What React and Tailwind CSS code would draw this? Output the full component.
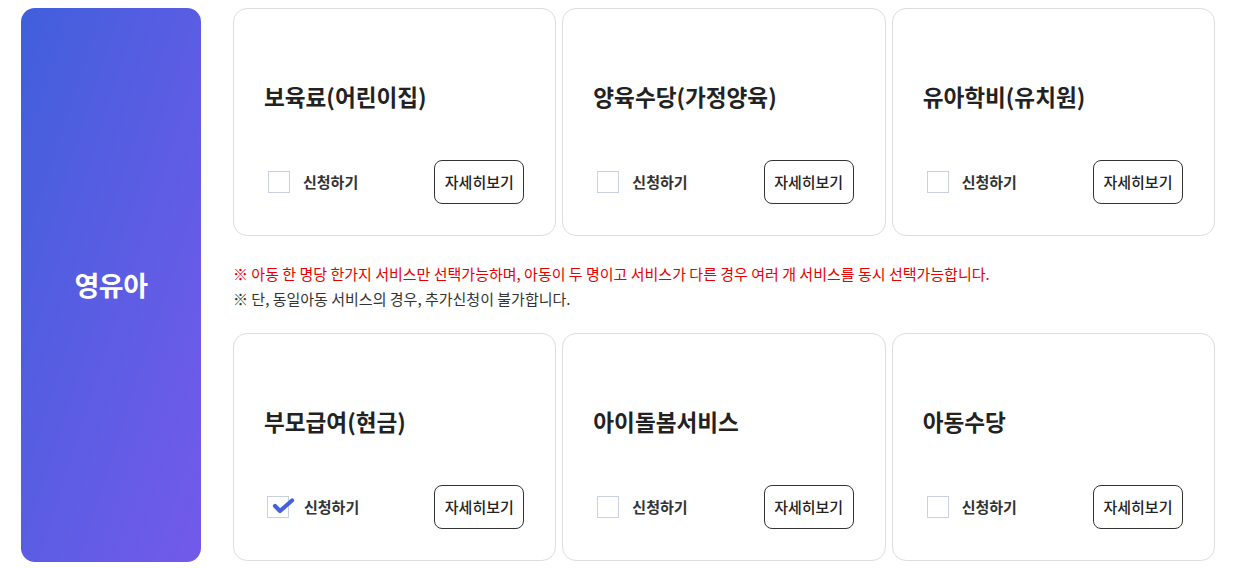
const services = [
  { title: '보육료(어린이집)', checked: false },
  { title: '양육수당(가정양육)', checked: false },
  { title: '유아학비(유치원)', checked: false },
];
const services2 = [
  { title: '부모급여(현금)', checked: true },
  { title: '아이돌봄서비스', checked: false },
  { title: '아동수당', checked: false },
];

function Card({ title, checked }) {
  return (
    <div className="flex-1 h-[228px] rounded-[14px] border border-[#dddddd] bg-white pl-[30px] pr-[31px] pt-[72px] flex flex-col">
      <h3 className="text-[22.6px] leading-[32px] font-bold text-[#222]">{title}</h3>
      <div className="mt-[47px] flex items-center justify-between">
        <label className="flex items-center pl-[4px] cursor-pointer">
          <span className={`relative w-[22px] h-[22px] border border-[#c8d0e4] bg-white ${checked ? 'mr-[15px] -ml-[1px]' : 'mr-[13px]'}`}>
            {checked && (
              <svg className="absolute left-0 top-0 overflow-visible" width="22" height="22" viewBox="0 0 22 22" fill="none">
                <path d="M7 9l5 5L24 3.5" stroke="#4561e0" strokeWidth="4.2" strokeLinecap="round" strokeLinejoin="round" />
              </svg>
            )}
          </span>
          <span className="text-[15px] font-bold text-[#333]">신청하기</span>
        </label>
        <button className="w-[90px] h-[44px] rounded-[8px] border border-[#333] text-[15px] font-medium text-[#222]">
          자세히보기
        </button>
      </div>
    </div>
  );
}

export default function App() {
  return (
    <div className="w-[1240px] h-[568px] bg-white flex gap-[32px] pl-[21px] pr-[25px] pt-[8px]" style={{ fontFamily: '"Noto Sans CJK KR", "Noto Sans", sans-serif' }}>
      <div className="w-[180px] h-[554px] rounded-[14px] flex items-center justify-center bg-gradient-to-br from-[#3f5fdb] to-[#725aeb]">
        <span className="text-white text-[27px] font-bold tracking-[-0.5px]">영유아</span>
      </div>
      <div className="flex-1 flex flex-col">
        <div className="flex gap-[6px]">
          {services.map(s => <Card key={s.title} {...s} />)}
        </div>
        <div className="h-[97px] flex flex-col justify-center text-[15px] leading-[25px] pt-[2px]">
          <p className="text-[#e60000]">※ 아동 한 명당 한가지 서비스만 선택가능하며, 아동이 두 명이고 서비스가 다른 경우 여러 개 서비스를 동시 선택가능합니다.</p>
          <p className="text-[#333]">※ 단, 동일아동 서비스의 경우, 추가신청이 불가합니다.</p>
        </div>
        <div className="flex gap-[6px]">
          {services2.map(s => <Card key={s.title} {...s} />)}
        </div>
      </div>
    </div>
  );
}
